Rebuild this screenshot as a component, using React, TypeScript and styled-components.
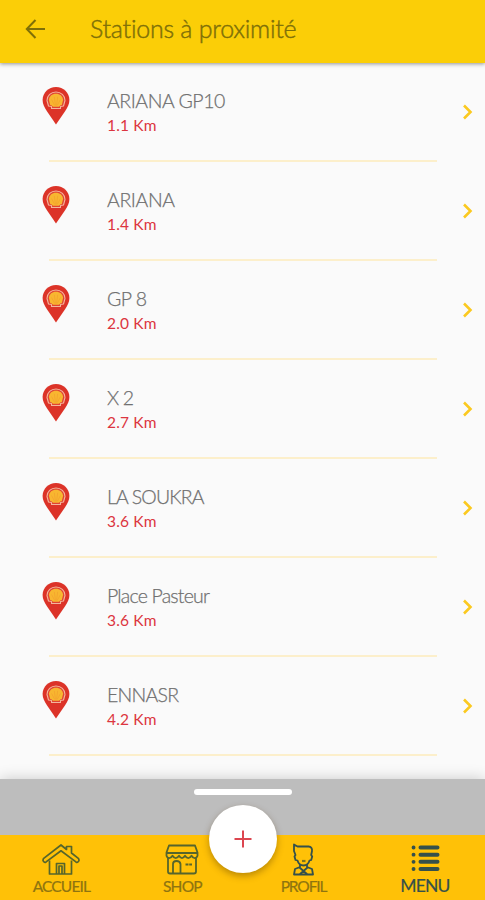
import React from 'react';
import styled, { createGlobalStyle } from 'styled-components';

const GlobalStyle = createGlobalStyle`
  * { box-sizing: border-box; }
  body { margin: 0; background: #fafafa; font-family: Lato, 'Open Sans', sans-serif; font-variant-ligatures: none; }
`;

const Screen = styled.main`
  width: 485px;
  height: 900px;
  display: flex;
  flex-direction: column;
  overflow: hidden;
  background: #fafafa;
`;

const Header = styled.header`
  height: 63px;
  flex: none;
  display: flex;
  align-items: center;
  padding: 0 0 5px 25px;
  gap: 44px;
  background: #fbce07;
  box-shadow: 0 1px 4px rgba(0, 0, 0, 0.42);
  z-index: 1;
`;

const Title = styled.h1`
  margin: -2px 0 0;
  font-size: 25px;
  line-height: 30px;
  font-weight: 300;
  -webkit-text-stroke: 0.45px #7f7008;
  letter-spacing: -0.25px;
  color: #7f7008;
  white-space: nowrap;
`;

const List = styled.ul`
  flex: 1;
  margin: 0;
  padding: 0;
  list-style: none;
`;

const Row = styled.li`
  height: 99px;
  display: grid;
  grid-template-columns: 65px 1fr 24px;
  padding-left: 42px;
`;

const Pin = styled.svg`
  margin-top: 23px;
  display: block;
`;

const Details = styled.div`
  height: 99px;
  padding-top: 26px;
  display: flex;
  flex-direction: column;
`;

const Name = styled.span<{ $spacing: number }>`
  font-size: 19.5px;
  line-height: 24px;
  font-weight: 300;
  -webkit-text-stroke: 0.25px #707070;
  letter-spacing: ${(p) => p.$spacing}px;
  color: #707070;
  white-space: nowrap;
`;

const Distance = styled.span`
  font-size: 15.5px;
  line-height: 24px;
  letter-spacing: 0.15px;
  color: #dc3540;
`;

const Divider = styled.div`
  grid-column: 1 / -1;
  height: 2px;
  margin: -2px 48px 0 7px;
  background: #fcefcb;
`;

const Chevron = styled.svg`
  display: block;
  margin: 41px 0 0 1px;
`;

const Sheet = styled.section`
  height: 56px;
  flex: none;
  display: flex;
  justify-content: center;
  align-items: flex-start;
  padding-top: 10px;
  background: #bdbdbd;
  box-shadow: 0 0 14px rgba(0, 0, 0, 0.2);
  z-index: 1;
`;

const Handle = styled.div`
  width: 98px;
  height: 6px;
  border-radius: 3px;
  background: #fff;
`;

const Nav = styled.nav`
  position: relative;
  z-index: 2;
  height: 65px;
  flex: none;
  display: grid;
  grid-template-columns: 122px 120px 122px 121px;
  background: #ffc107;
`;

const NavItem = styled.button<{ $active?: boolean }>`
  border: 0;
  padding: 8px 0 0;
  background: transparent;
  display: flex;
  flex-direction: column;
  align-items: center;
  font-family: inherit;
  color: ${(p) => (p.$active ? '#35504b' : '#8e7410')};
`;

const NavLabel = styled.span<{ $size: number; $spacing: number }>`
  font-size: ${(p) => p.$size}px;
  line-height: 20px;
  letter-spacing: ${(p) => p.$spacing}px;
  margin-right: ${(p) => p.$spacing}px;
  -webkit-text-stroke: 0.2px currentColor;
`;

const AddButton = styled.button`
  position: absolute;
  left: 209px;
  top: -30px;
  width: 68px;
  height: 68px;
  padding: 0;
  border: 0;
  border-radius: 50%;
  background: #fff;
  display: grid;
  place-items: center;
  box-shadow: 0 3px 7px rgba(80, 50, 0, 0.4);
`;

const stations = [
  { name: 'ARIANA GP10', km: '1.1', spacing: -0.45 },
  { name: 'ARIANA', km: '1.4', spacing: -0.4 },
  { name: 'GP 8', km: '2.0', spacing: -0.5 },
  { name: 'X 2', km: '2.7', spacing: -0.8 },
  { name: 'LA SOUKRA', km: '3.6', spacing: -0.85 },
  { name: 'Place Pasteur', km: '3.6', spacing: -0.8 },
  { name: 'ENNASR', km: '4.2', spacing: -0.75 },
];

const StationPin = () => (
  <Pin width="28" height="40" viewBox="0 0 28 40">
    <path d="M14 1C6.500 1 .6 6.800.6 14c0 4 2 7.500 4 10.800L14 38.500l9.400-13.700c2-3.300 4-6.800 4-10.800C27.400 6.800 21.500 1 14 1Z" fill="#dc3328" />
    <path d="M9.500 22.500v-2l-3-.5-1.500-5.500C5 9.500 9 6 14 6s9 3.500 9 8.500L21.500 20l-3 .5v2Z" fill="#df4433" stroke="#f3b59c" strokeWidth="1.100" strokeLinejoin="round" />
    <path d="m11 20.700-3-2.500-1.100-4.400C7.500 10 10 7.800 14 7.800s6.500 2.200 7.100 6l-1.100 4.400-3 2.500Z" fill="#f8b630" />
    <path d="m12.700 19.500-3.200-6m4 6-1.200-8.700m2.200 8.700 1.200-8.700m-.5 8.700 3.300-6" fill="none" stroke="#f0962c" strokeWidth=".5" />
  </Pin>
);

const HomeIcon = () => (
  <svg width="40" height="33" viewBox="0 0 40 33" fill="none" stroke="#56652c" strokeWidth="1.700" strokeLinejoin="round">
    <path d="M20 2 2.400 15.700c-1.300 2 .7 4.400 2.700 3.200L20 7.800l14.900 11.100c2 1.200 4-1.200 2.700-3.200L30.500 10V3.500h-5v3Z" />
    <path d="M8.500 17.500V31h22V17.500M15.500 31V20.500h8V31M18 31v-8h3v8" />
  </svg>
);

const ShopIcon = () => (
  <svg width="36" height="33" viewBox="0 0 36 33" fill="none" stroke="#56652c" strokeWidth="1.800" strokeLinejoin="round">
    <path d="M5 2.500h26l2.500 7v3.200c-1 3.100-4.600 3.100-6 0-1.500 3.100-5 3.100-6.500 0-1.500 3.100-4.500 3.100-6 0-1.500 3.100-5 3.100-6.500 0-1.500 3.100-5 3.100-6 0V9.500Z" />
    <path d="M2.500 10h31M4 15v13.500q0 2 2 2h24q2 0 2-2V15M9 30v-9q0-3 3.500-3t4 3v9" />
    <path d="M21.500 21.500H28" strokeWidth="2" strokeDasharray="3 .7" />
  </svg>
);

const ProfileIcon = () => (
  <svg width="28" height="33" viewBox="0 0 28 33" fill="none" stroke="#35504b" strokeWidth="1.800" strokeLinejoin="round">
    <path d="M5 1.500 8.500 3.500h11q4 .5 3.500 4.500l-.8 4 1 1.500-1 3.500-1.700.5c-1 3.500-3.500 5-6 5s-5-1.500-6-5L6.500 17l-1-3.500 1-1.500-1.500-4Z" />
    <path d="M11 22v2l-5 2-1 5.500h19l-1-5.500-5-2v-2M10.500 24.500l4 3.500 4-3.500M10.500 31.500l4-3.500 4 3.500" />
    <path d="M13 18h3.500" strokeWidth="2.200" stroke="#7c7320" />
  </svg>
);

const MenuIcon = () => (
  <svg width="32" height="33" viewBox="0 0 32 33" stroke="#35504b" strokeWidth="4" strokeLinecap="round">
    <path d="M11.500 4.500H28.500M11.500 11.700H28.500M11.500 18.800H28.500M11.500 26H28.500" />
    <path d="M4.500 4.500h.1M4.500 11.700h.1M4.500 18.800h.1M4.500 26h.1" strokeWidth="3.800" />
  </svg>
);

export default function App() {
  return (
    <>
      <GlobalStyle />
      <Screen>
        <Header>
          <svg width="21" height="22" viewBox="0 0 21 22" fill="none" stroke="#7f7008" strokeWidth="2">
            <path d="M20 11H2M10.500 2 1.800 11l8.700 9" />
          </svg>
          <Title>Stations à proximité</Title>
        </Header>
        <List>
          {stations.map((s) => (
            <Row key={s.name}>
              <StationPin />
              <Details>
                <Name $spacing={s.spacing}>{s.name}</Name>
                <Distance>{s.km} Km</Distance>
              </Details>
              <Chevron width="12" height="16" viewBox="0 0 12 16" fill="none" stroke="#fbc91f" strokeWidth="2.600">
                <path d="m2 1.500 6.500 6.500L2 14.500" />
              </Chevron>
              <Divider />
            </Row>
          ))}
        </List>
        <Sheet>
          <Handle />
        </Sheet>
        <Nav>
          <NavItem><HomeIcon /><NavLabel $size={15.500} $spacing={-0.85}>ACCUEIL</NavLabel></NavItem>
          <NavItem><ShopIcon /><NavLabel $size={15.500} $spacing={-0.8}>SHOP</NavLabel></NavItem>
          <NavItem><ProfileIcon /><NavLabel $size={15.500} $spacing={-1.1}>PROFIL</NavLabel></NavItem>
          <NavItem $active><MenuIcon /><NavLabel $size={17.500} $spacing={-0.8}>MENU</NavLabel></NavItem>
          <AddButton aria-label="+">
            <svg width="18" height="18" viewBox="0 0 18 18" stroke="#dc4650" strokeWidth="2">
              <path d="M9 .5v17M.5 9h17" />
            </svg>
          </AddButton>
        </Nav>
      </Screen>
    </>
  );
}
